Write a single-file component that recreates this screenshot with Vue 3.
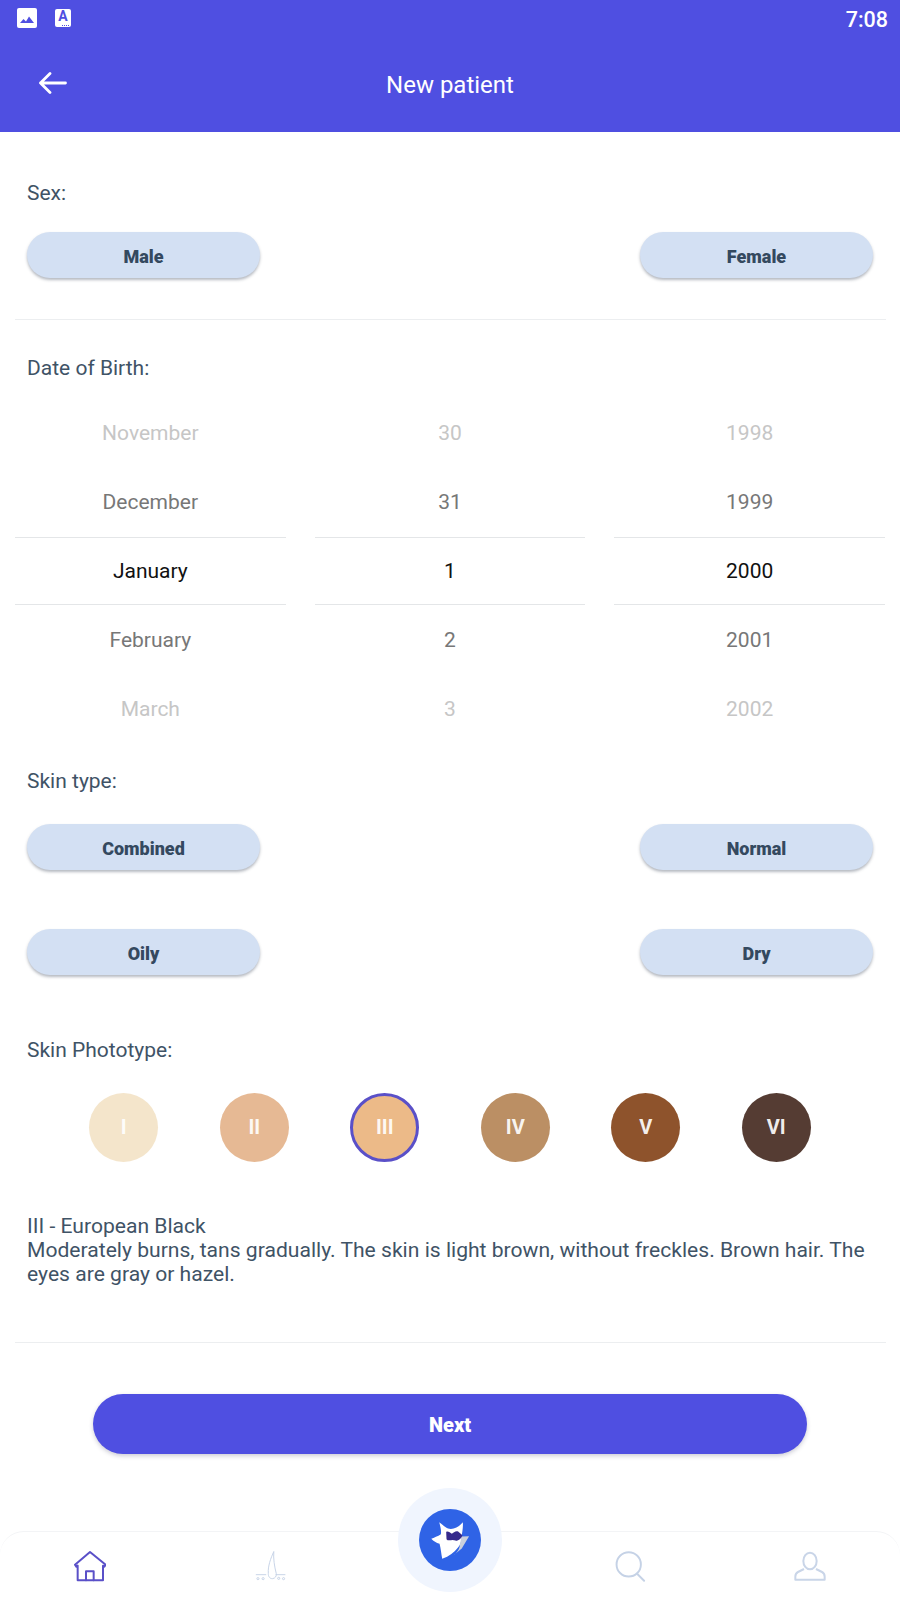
<template>
  <div class="screen">
    <header class="header">
      <div class="status">
        <div class="status-icons">
          <svg class="img-icon" viewBox="0 0 20 20">
            <rect width="20" height="20" rx="2" fill="#fff" />
            <path d="M3 15l3.5-4 2.5 2.5 3-5 5 6.5z" fill="#4f4fe1" />
          </svg>
          <div class="a-icon">
            <span>A</span>
            <i class="dots"></i>
          </div>
        </div>
        <span class="time">7:08</span>
      </div>
      <div class="appbar">
        <svg class="back" viewBox="0 0 28 22" fill="none" stroke="#fff" stroke-width="2.8" stroke-linecap="round" stroke-linejoin="round">
          <path d="M27 11H2M11.500 1.500L2 11l9.500 9.500" />
        </svg>
        <h1>New patient</h1>
      </div>
    </header>

    <section class="sex">
      <p class="label">Sex:</p>
      <div class="btn-row">
        <button class="pill">Male</button>
        <button class="pill">Female</button>
      </div>
    </section>

    <hr class="divider" />

    <p class="label dob">Date of Birth:</p>
    <div class="picker">
      <div v-for="(col, i) in pickerCols" :key="i" class="picker-col">
        <div v-for="(val, j) in col" :key="val" class="picker-row" :class="rowClass[j]">{{ val }}</div>
      </div>
    </div>

    <section class="skin">
      <p class="label">Skin type:</p>
      <div class="btn-row first">
        <button class="pill">Combined</button>
        <button class="pill">Normal</button>
      </div>
      <div class="btn-row second">
        <button class="pill">Oily</button>
        <button class="pill">Dry</button>
      </div>
    </section>

    <p class="label photo">Skin Phototype:</p>
    <div class="photos">
      <div
        v-for="p in phototypes"
        :key="p.name"
        class="photo-dot"
        :class="{ active: p.name === 'III' }"
        :style="{ background: p.color }"
      >{{ p.name }}</div>
    </div>

    <p class="desc">
      III - European Black<br />
      Moderately burns, tans gradually. The skin is light brown, without freckles. Brown hair. The eyes are gray or hazel.
    </p>

    <hr class="divider second-line" />

    <button class="next">Next</button>

    <nav class="nav">
      <svg class="nav-icon" viewBox="220 210 96 94" fill="none" stroke="#5a50c8" stroke-width="6" stroke-linejoin="round" stroke-linecap="round">
        <path d="M268 215l-45 38 4 6 4-3v44h76v-44l4 3 4-6z" />
        <path d="M256 300v-27h23v27" />
      </svg>
      <svg class="nav-icon" viewBox="755 205 105 105" fill="none" stroke="#c3d0e5" stroke-width="3">
        <path d="M820 210c-10 22-20 48-18 72-1 10 6 18 14 17 8-1 14-8 12-17-6-24-10-48-8-72z" />
        <path d="M761 286h34M826 286h32" />
        <circle cx="768" cy="299" r="3.500" />
        <circle cx="785" cy="299" r="3.500" />
        <circle cx="836" cy="298" r="3.500" />
        <circle cx="852" cy="299" r="3.500" />
      </svg>
      <div class="nav-gap"></div>
      <svg class="nav-icon" viewBox="488 205 96 100" fill="none" stroke="#c5d2e6" stroke-width="6" stroke-linecap="round">
        <circle cx="532" cy="250" r="38" />
        <path d="M559 280l21 21" />
      </svg>
      <svg class="nav-icon" viewBox="1030 210 96 94" fill="none" stroke="#c9d5e8" stroke-width="6" stroke-linejoin="round">
        <ellipse cx="1078" cy="242" rx="20" ry="25" />
        <path d="M1060 266l-18 9c-6 3-8 8-8 14v9h88v-9c0-6-2-11-8-14l-18-9" />
      </svg>
      <div class="fab">
        <div class="fab-inner">
          <svg viewBox="118 85 187 187">
            <path d="M179 125c10 6 20 20 35 20 14 0 28-10 36-20 2 12-2 30-3 42-1 16-4 26-12 35-10 14-26 26-47 33-3-14-4-30-8-45-10-2-18-8-25-15 8-4 20-8 29-14 2-12-2-24-5-36z" fill="#fff" />
            <path d="M246 168l23-1-22 37-24 20c10-8 18-20 18-30z" fill="#c9cfdc" />
            <path d="M200 154c5-3 12 2 17 6 5-4 12-10 19-7l13 11c-2 7-8 14-15 16-6 2-12-2-18-1-5 0-12 2-15-3z" fill="#352a8c" />
          </svg>
        </div>
      </div>
    </nav>
  </div>
</template>

<script setup>
const pickerCols = [
  ['November', 'December', 'January', 'February', 'March'],
  ['30', '31', '1', '2', '3'],
  ['1998', '1999', '2000', '2001', '2002']
]
const rowClass = ['far', 'near', 'selected', 'near', 'far']
const phototypes = [
  { name: 'I', color: '#f4e5cb' },
  { name: 'II', color: '#e6b994' },
  { name: 'III', color: '#ecba88' },
  { name: 'IV', color: '#bb8f64' },
  { name: 'V', color: '#8e532c' },
  { name: 'VI', color: '#553c33' }
]
</script>

<style>
body { background: #fff; }
</style>

<style scoped>
.screen {
  position: relative;
  width: 900px;
  height: 1600px;
  overflow: hidden;
  background: #fff;
  display: flex;
  flex-direction: column;
  font-family: Roboto, "Liberation Sans", sans-serif;
}
.header { height: 132px; background: #4f4fe1; color: #fff; }
.status { height: 36px; display: flex; justify-content: space-between; align-items: center; padding: 0 12px 0 17px; }
.status-icons { display: flex; align-items: center; gap: 18px; }
.img-icon { width: 20px; height: 20px; }
.a-icon { width: 16px; height: 18px; background: #fff; border-radius: 2px; position: relative; text-align: center; }
.a-icon span { display: block; color: #4f4fe1; font-size: 14px; line-height: 15px; font-weight: 700; }
.dots { position: absolute; right: 2px; bottom: 1px; width: 7px; border-bottom: 1.500px dotted #4f4fe1; }
.time { font-size: 21.500px; font-weight: 500; position: relative; top: 1px; }
.appbar { height: 96px; display: flex; align-items: center; justify-content: center; position: relative; }
.appbar h1 { margin: 0; font-size: 24px; font-weight: 400; position: relative; top: 1px; }
.back { position: absolute; left: 38px; top: 36px; width: 29px; height: 22px; }

.label { margin: 0; padding-left: 27px; font-size: 21px; line-height: 24px; color: #3f5366; }
.sex { padding-top: 49px; }
.btn-row { display: flex; justify-content: space-between; padding: 0 27px; margin-top: 27px; }
.pill {
  width: 233px;
  height: 46px;
  border: none;
  border-radius: 23px;
  background: #d3e0f3;
  color: #34495f;
  font-family: inherit;
  font-size: 18px;
  font-weight: 900;
  padding: 3px 0 0;
  box-shadow: 0 2px 3px rgba(60, 70, 90, 0.38);
}
.divider { margin: 41px 14px 0 15px; border: none; border-top: 1.500px solid #eceef0; }

.dob { margin-top: 36px; }
.picker { display: flex; gap: 29px; padding: 0 15px; margin-top: 19px; }
.picker-col { flex: 1; }
.picker-row {
  height: 68.800px;
  display: flex;
  align-items: center;
  justify-content: center;
  font-size: 21px;
  box-sizing: border-box;
}
.picker-row.far { color: #c6c6c6; }
.picker-row.near { color: #777; }
.picker-row.selected { color: #111; border-top: 1.500px solid #e4e6e8; border-bottom: 1.500px solid #e4e6e8; }

.skin { padding-top: 26px; }
.skin .first { margin-top: 31px; }
.skin .second { margin-top: 59px; }

.photo { margin-top: 63px; }
.photos { display: flex; justify-content: center; gap: 61.500px; margin-top: 31px; }
.photo-dot {
  width: 69px;
  height: 69px;
  border-radius: 50%;
  display: flex;
  align-items: center;
  justify-content: center;
  color: rgba(255, 255, 255, 0.92);
  font-size: 20px;
  font-weight: 700;
  box-sizing: border-box;
}
.photo-dot.active { border: 3px solid #5a50c8; }

.desc { margin: 52px 27px 0; font-size: 21.100px; line-height: 24px; color: #3f5366; }
.second-line { margin-top: 56px; }

.next {
  align-self: center;
  width: 714px;
  height: 60px;
  margin-top: 51px;
  border: none;
  border-radius: 30px;
  background: #4f4fe1;
  color: #fff;
  font-family: inherit;
  font-size: 20px;
  font-weight: 900;
  padding: 2px 0 0;
  box-shadow: 0 2px 4px rgba(60, 60, 90, 0.25);
}

.nav {
  position: absolute;
  left: 0;
  right: 0;
  bottom: 0;
  height: 69px;
  box-sizing: border-box;
  border-top: 1.500px solid #f3f4f6;
  border-radius: 24px 24px 0 0;
  display: grid;
  grid-template-columns: repeat(5, 1fr);
  justify-items: center;
  padding: 18px 0 0;
  background: #fff;
}
.nav-icon { width: 32px; height: 32px; }
.fab {
  position: absolute;
  left: 398px;
  top: -44px;
  width: 104px;
  height: 104px;
  border-radius: 50%;
  background: #f0f5fe;
  display: flex;
  align-items: center;
  justify-content: center;
}
.fab-inner { width: 62px; height: 62px; border-radius: 50%; background: #2f63e6; }
.fab-inner svg { display: block; width: 62px; height: 62px; }
</style>
